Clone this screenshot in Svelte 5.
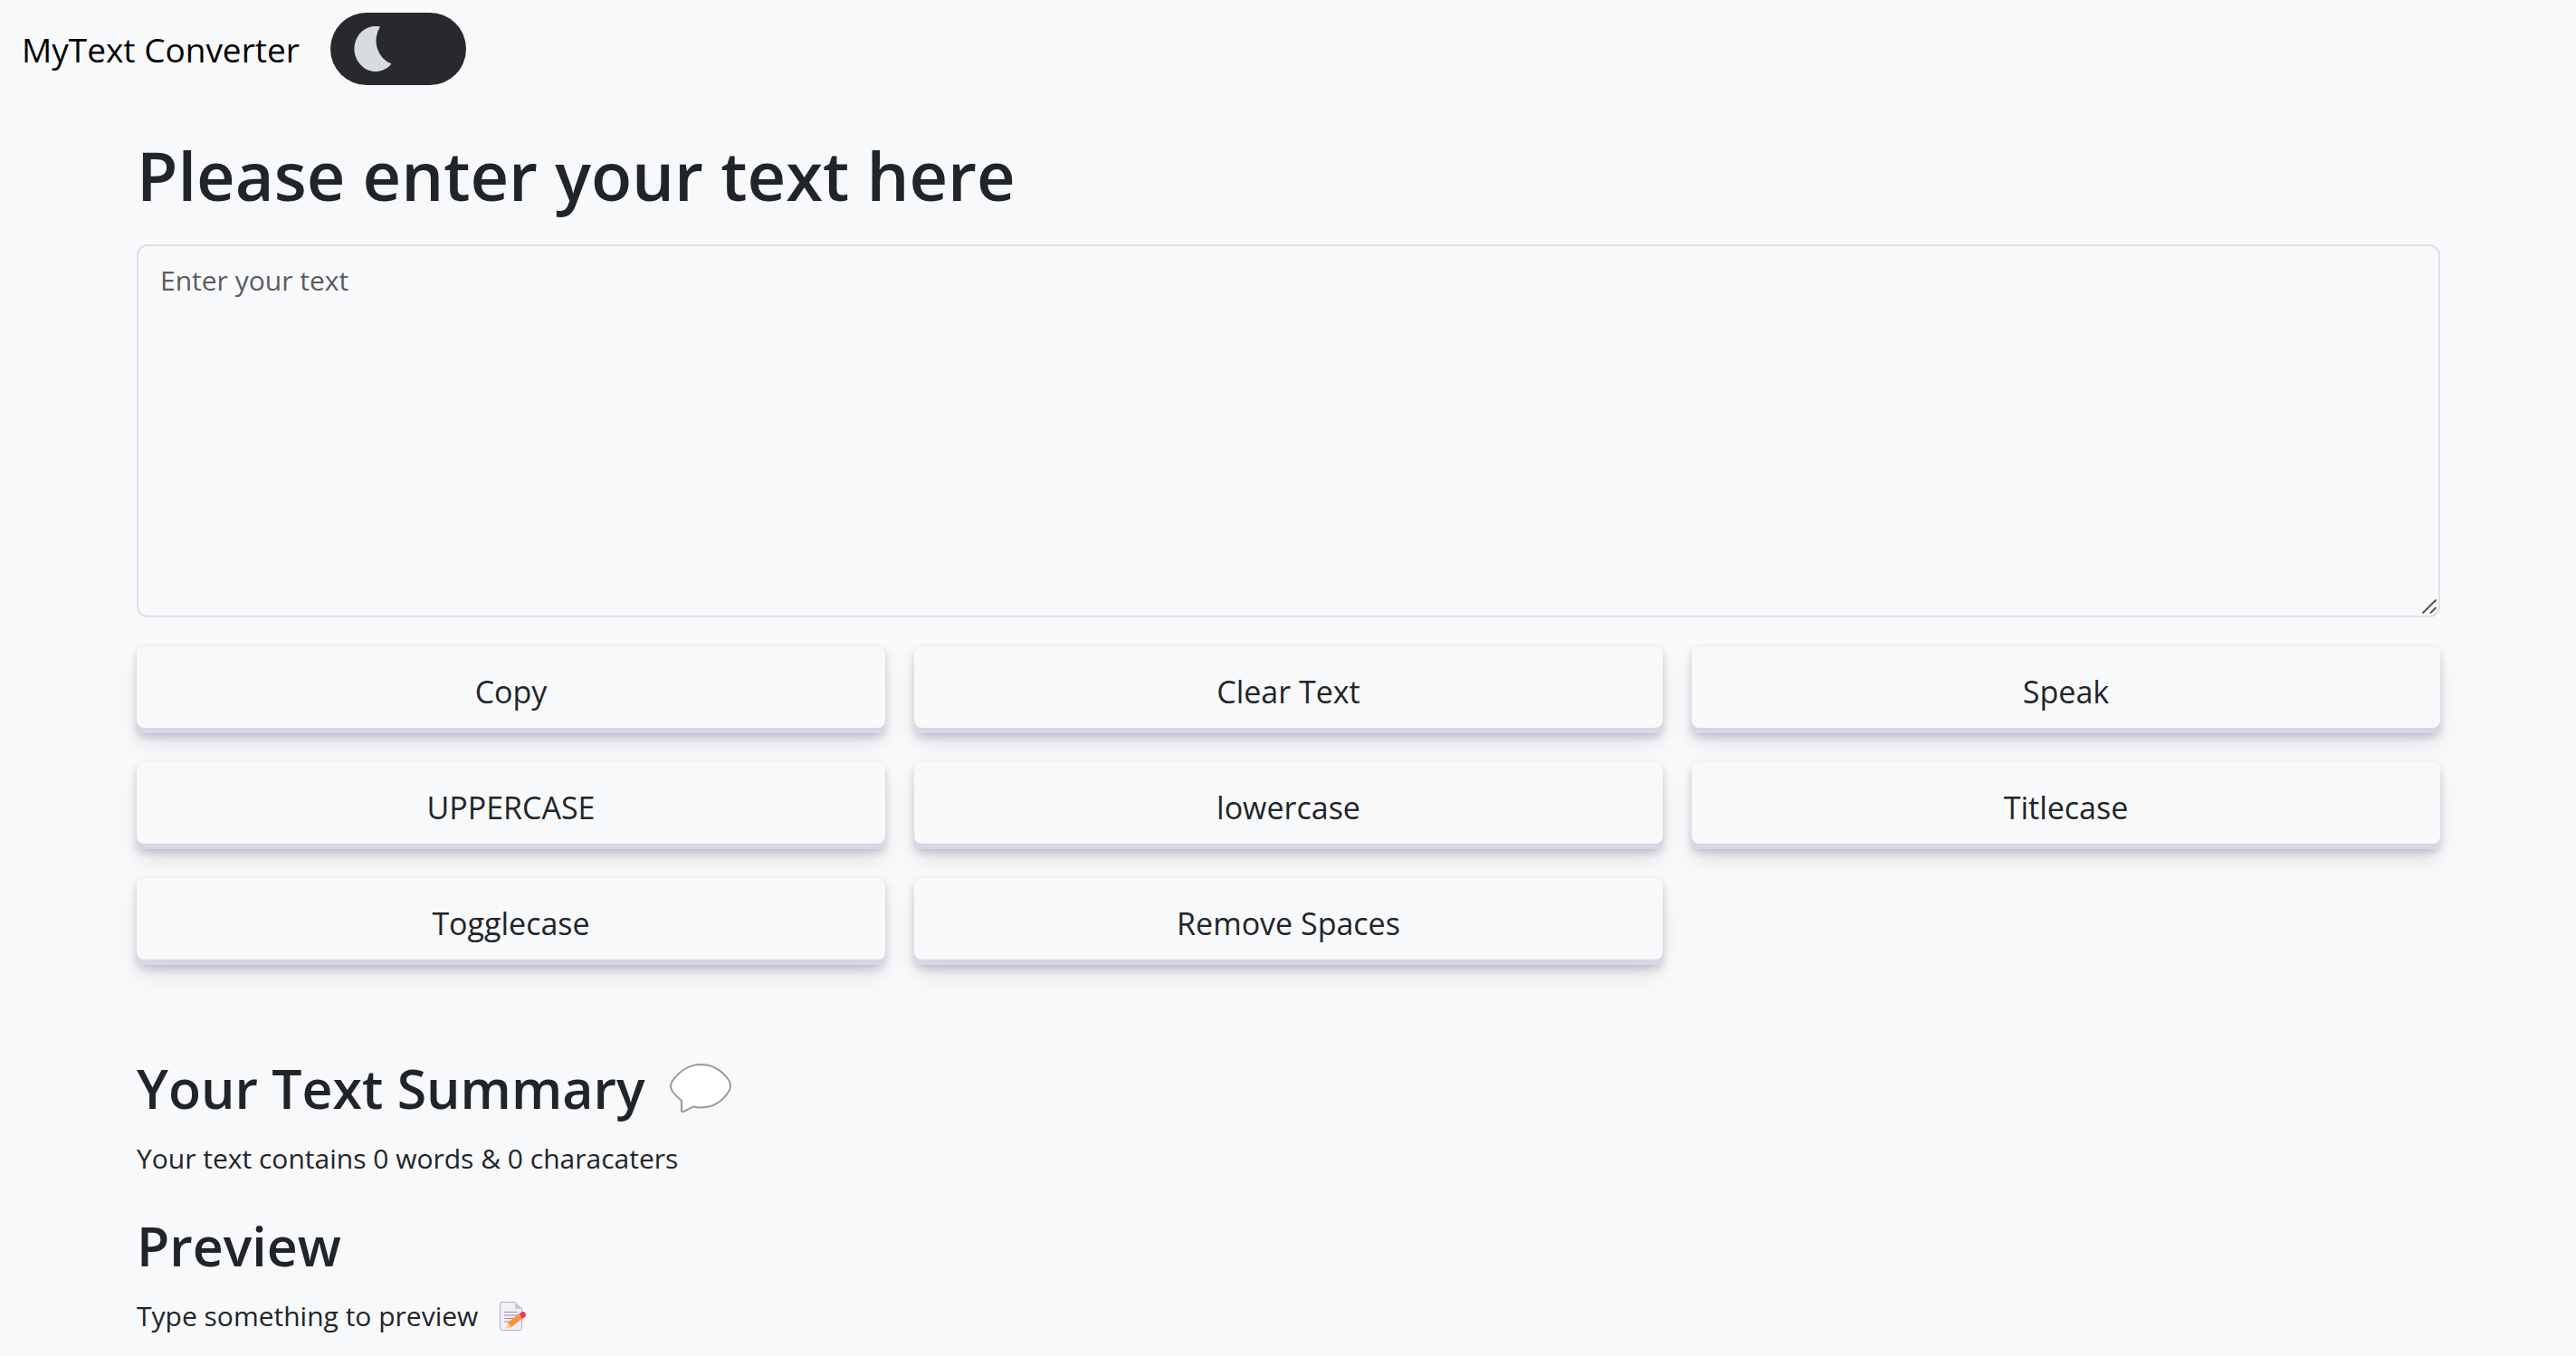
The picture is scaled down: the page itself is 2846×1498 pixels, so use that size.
<script>
  let dark = $state(false);
  let text = $state('');

  const words = $derived(text.split(/\s+/).filter(Boolean).length);

  const titleCase = (s) => s.toLowerCase().replace(/\b\w/g, (c) => c.toUpperCase());
  const toggleCase = (s) =>
    [...s].map((c) => (c === c.toUpperCase() ? c.toLowerCase() : c.toUpperCase())).join('');

  const actions = [
    { label: 'Copy', run: () => navigator.clipboard.writeText(text) },
    { label: 'Clear Text', run: () => (text = '') },
    { label: 'Speak', run: () => speechSynthesis.speak(new SpeechSynthesisUtterance(text)) },
    { label: 'UPPERCASE', run: () => (text = text.toUpperCase()) },
    { label: 'lowercase', run: () => (text = text.toLowerCase()) },
    { label: 'Titlecase', run: () => (text = titleCase(text)) },
    { label: 'Togglecase', run: () => (text = toggleCase(text)) },
    { label: 'Remove Spaces', run: () => (text = text.split(/\s+/).join(' ').trim()) }
  ];
</script>

<div class="app" class:dark>
  <nav>
    <a class="brand" href="#top">MyText Converter</a>
    <label class="toggle">
      <input type="checkbox" aria-label="Dark mode" bind:checked={dark} />
      <svg viewBox="0 0 44 50" aria-hidden="true">
        <path d="M29 0.500A23.500 25 0 1 0 41.500 41.500A25 27 0 0 1 29 0.500Z" />
      </svg>
    </label>
  </nav>

  <main>
    <h1><label for="source">Please enter your text here</label></h1>
    <div class="field">
      <textarea id="source" placeholder="Enter your text" bind:value={text}></textarea>
      <svg class="grip" viewBox="0 0 16 16" aria-hidden="true">
        <path d="M.5 15.500L15.500 .5M9 15.500L15.500 9" />
      </svg>
    </div>

    <div class="actions">
      {#each actions as action}
        <button type="button" onclick={action.run}>{action.label}</button>
      {/each}
    </div>

    <section class="summary">
      <h2>
        Your Text Summary
        <svg class="bubble" viewBox="0 0 68 54" aria-hidden="true">
          <path d="M34 1C47 1 58 8 65 18Q69 25 65 31C58 42 47 48.500 34 48.500Q29 48.500 26 47.500L15 53Q13 54 13 51.500V41Q7 36 3 31Q-1 25 3 19C10 9 21 1 34 1Z" />
        </svg>
      </h2>
      <p>Your text contains {words} words &amp; {text.length} characaters</p>
    </section>

    <section class="preview">
      <h2>Preview</h2>
      <p>
        {#if text}
          {text}
        {:else}
          Type something to preview
          <svg class="memo" viewBox="0 0 30 32" aria-hidden="true">
            <path d="M2.500 .5H17L24.500 8V29.500Q24.500 31.500 22.500 31.500H2.500Q.5 31.500 .5 29.500V2.500Q.5 .5 2.500 .5Z" fill="#f3eef8" stroke="#b4acbc" />
            <path d="M17 .5V6Q17 8 19 8H24.500Z" fill="#cdc4d6" />
            <path d="M5 11.500H20M5 15H20M5 18.500H17M5 22H12" stroke="#998ea4" fill="none" />
            <path d="M9 23L21 13.500L25 18.500L13 28Z" fill="#ff8e3a" />
            <path d="M9 23L13 28L7 29.500Z" fill="#ffce7c" />
            <path d="M21.500 13.500L25 11Q26.500 10.500 28 12L29 14Q29.500 15.500 28.500 16.500L25 19Z" fill="#f8315b" />
          </svg>
        {/if}
      </p>
    </section>
  </main>
</div>

<style>
  :global(body) {
    margin: 0;
    background: #f8f9fa;
  }

  .app {
    --bg: #f8f9fa;
    --fg: #212529;
    --brand: #000;
    min-height: 100vh;
    box-sizing: border-box;
    background: var(--bg);
    color: var(--fg);
    font-family: 'Open Sans', 'Noto Sans', sans-serif;
    font-size: 30px;
    line-height: 48px;
  }

  .dark {
    --bg: #28292c;
    --fg: #f8fafc;
    --brand: #fff;
  }

  nav {
    display: flex;
    align-items: center;
    gap: 34px;
    padding: 14px 24px;
  }

  .brand {
    padding-top: 2px;
    color: var(--brand);
    font-size: 37px;
    line-height: 60px;
    text-decoration: none;
  }

  .toggle {
    display: flex;
    align-items: center;
    box-sizing: border-box;
    width: 150px;
    height: 80px;
    padding: 0 26px;
    border-radius: 40px;
    background: #28292c;
    cursor: pointer;
  }

  .toggle input {
    position: absolute;
    opacity: 0;
  }

  .toggle svg {
    width: 44px;
    height: 50px;
    fill: #d8dbe0;
  }

  main {
    padding: 38px 150px 0 151px;
  }

  h1,
  h2 {
    margin: 0;
    font-weight: 600;
  }

  h1 {
    margin-bottom: 28px;
    font-size: 74px;
    line-height: 96px;
  }

  h2 {
    display: flex;
    align-items: center;
    gap: 28px;
    margin-bottom: 16px;
    font-size: 59px;
    line-height: 76px;
  }

  .field {
    display: grid;
    position: relative;
  }

  textarea {
    display: block;
    box-sizing: border-box;
    width: 100%;
    height: 412px;
    padding: 14px 24px;
    border: 2px solid #dedfe6;
    border-radius: 12px;
    background: var(--bg);
    color: var(--fg);
    font: inherit;
    resize: vertical;
  }

  textarea::placeholder {
    color: #595c5f;
  }

  textarea::-webkit-resizer {
    background: transparent;
  }

  .grip {
    position: absolute;
    right: 4px;
    bottom: 4px;
    width: 16px;
    height: 16px;
    fill: none;
    stroke: #555;
    stroke-width: 2;
    pointer-events: none;
  }

  .actions {
    display: grid;
    grid-template-columns: repeat(3, 1fr);
    gap: 32px;
    margin-top: 32px;
  }

  button {
    height: 96px;
    padding: 4px 32px 0;
    border: 0;
    border-radius: 8px;
    background: var(--bg);
    box-shadow:
      rgba(45, 35, 66, 0.2) 0 4px 8px,
      rgba(45, 35, 66, 0.15) 0 14px 26px -6px,
      #d6d6e7 0 -6px 0 inset;
    color: var(--fg);
    font-family: inherit;
    font-size: 34px;
    line-height: 48px;
    cursor: pointer;
  }

  .summary {
    margin-top: 98px;
  }

  .preview {
    margin-top: 34px;
  }

  p {
    display: flex;
    align-items: center;
    gap: 24px;
    margin: 0;
  }

  .bubble {
    width: 68px;
    height: 54px;
    fill: #fff;
    stroke: #999;
    stroke-width: 2;
  }

  .memo {
    width: 30px;
    height: 32px;
  }
</style>
